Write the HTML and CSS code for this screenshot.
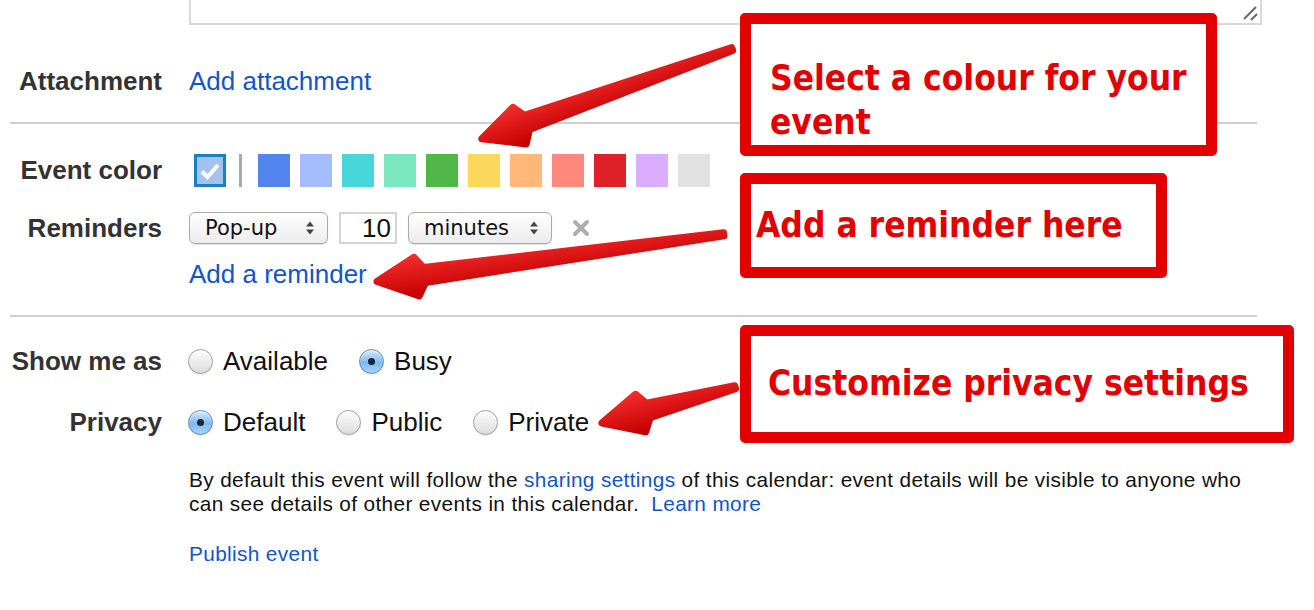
FILE: index.html
```html
<!DOCTYPE html>
<html lang="en">

<head>
    <meta charset="UTF-8" />
    <title>Event details</title>
    <link rel="stylesheet" href="styles.css">
</head>

<body>
    <div class="page">
        <!-- bottom of the description textarea -->
        <div class="desc-box">
            <svg class="grip" width="16" height="16" viewBox="0 0 16 16">
                <line x1="2" y1="14" x2="14" y2="2" stroke="#666" stroke-width="2" />
                <line x1="9" y1="15" x2="15" y2="9" stroke="#666" stroke-width="2" />
            </svg>
        </div>

        <div class="row row-attach">
            <div class="label">Attachment</div>
            <div class="field"><a href="#">Add attachment</a></div>
        </div>

        <hr class="sep">

        <div class="row row-color">
            <div class="label">Event color</div>
            <div class="field swatches">
                <span class="swatch current">
                    <svg width="26" height="26" viewBox="0 0 26 26">
                        <path d="M5 13.5 L10.5 19 L21 7" fill="none" stroke="#fff" stroke-width="4" />
                    </svg>
                </span>
                <span class="swatch-bar"></span>
                <span class="swatch" style="background:#5484ed"></span>
                <span class="swatch" style="background:#a4bdfc"></span>
                <span class="swatch" style="background:#46d6db"></span>
                <span class="swatch" style="background:#7ae7bf"></span>
                <span class="swatch" style="background:#51b749"></span>
                <span class="swatch" style="background:#fbd75b"></span>
                <span class="swatch" style="background:#ffb878"></span>
                <span class="swatch" style="background:#ff887c"></span>
                <span class="swatch" style="background:#dc2127"></span>
                <span class="swatch" style="background:#dbadff"></span>
                <span class="swatch" style="background:#e1e1e1"></span>
            </div>
        </div>

        <div class="row row-remind">
            <div class="label">Reminders</div>
            <div class="field reminder">
                <span class="select select-type">Pop-up
                    <svg class="updown" width="10" height="14" viewBox="0 0 10 14">
                        <path d="M1 5.5 L5 0.5 L9 5.5 Z M1 8.5 L5 13.5 L9 8.5 Z" fill="#444" />
                    </svg>
                </span>
                <span class="num">10</span>
                <span class="select select-unit">minutes
                    <svg class="updown" width="10" height="14" viewBox="0 0 10 14">
                        <path d="M1 5.5 L5 0.5 L9 5.5 Z M1 8.5 L5 13.5 L9 8.5 Z" fill="#444" />
                    </svg>
                </span>
                <svg class="remove" width="18" height="18" viewBox="0 0 18 18">
                    <path d="M3 3 L15 15 M15 3 L3 15" stroke="#adadad" stroke-width="4" stroke-linecap="round" />
                </svg>
            </div>
        </div>

        <div class="row row-add">
            <div class="label"></div>
            <div class="field"><a href="#">Add a reminder</a></div>
        </div>

        <hr class="sep sep-2">

        <div class="row row-show">
            <div class="label">Show me as</div>
            <div class="field options">
                <label class="option"><span class="radio"></span>Available</label>
                <label class="option"><span class="radio checked"></span>Busy</label>
            </div>
        </div>

        <div class="row row-privacy">
            <div class="label">Privacy</div>
            <div class="field options">
                <label class="option"><span class="radio checked"></span>Default</label>
                <label class="option"><span class="radio"></span>Public</label>
                <label class="option"><span class="radio"></span>Private</label>
            </div>
        </div>

        <p class="note">By default this event will follow the <a href="#">sharing settings</a> of this calendar: event details will be visible to anyone who<br>can see details of other events in this calendar. &nbsp;<a href="#">Learn more</a></p>

        <p class="publish"><a href="#">Publish event</a></p>

        <!-- annotation layer -->
        <svg class="arrows" width="1314" height="610" viewBox="0 0 1314 610">
            <defs>
                <linearGradient id="red" x1="0" y1="0" x2="0" y2="1">
                    <stop offset="0" stop-color="#f22a2a" />
                    <stop offset="1" stop-color="#c40000" />
                </linearGradient>
            </defs>
            <g transform="translate(478 140) rotate(-19.7)">
                <path d="M4 0 L44 -19 L52 -7.5 L270 -1.5 L270 1.5 L52 7.5 L44 20 Z" fill="url(#red)" stroke="url(#red)" stroke-width="7" stroke-linejoin="round" />
            </g>
            <g transform="translate(373 282) rotate(-7.74)">
                <path d="M4 0 L44 -19 L52 -7.5 L354 -1.5 L354 1.5 L52 7.5 L44 20 Z" fill="url(#red)" stroke="url(#red)" stroke-width="7" stroke-linejoin="round" />
            </g>
            <g transform="translate(598 424) rotate(-15)">
                <path d="M4 0 L44 -19 L52 -7.5 L142 -1.5 L142 1.5 L52 7.5 L44 20 Z" fill="url(#red)" stroke="url(#red)" stroke-width="7" stroke-linejoin="round" />
            </g>
        </svg>

        <div class="callout callout-color">Select a colour for your<br>event</div>
        <div class="callout callout-remind">Add a reminder here</div>
        <div class="callout callout-privacy">Customize privacy settings</div>
    </div>
</body>

</html>
```

FILE: styles.css
```css
body {
    margin: 0;
    font-family: "Liberation Sans", Arial, sans-serif;
    color: #222;
    background-color: #fff;
}

a {
    color: #1155cc;
    text-decoration: none;
}

.page {
    position: relative;
    width: 1314px;
    height: 610px;
    overflow: hidden;
}

.desc-box {
    position: relative;
    box-sizing: border-box;
    margin-left: 189px;
    width: 1073px;
    height: 25px;
    border: 2px solid #d9d9d9;
    border-top: none;
}

.grip {
    position: absolute;
    right: 2px;
    bottom: 2px;
}

.row {
    display: grid;
    grid-template-columns: 162px 1fr;
    column-gap: 27px;
    align-items: center;
}

.label {
    text-align: right;
    font-weight: bold;
    font-size: 26px;
    color: #333;
}

.field {
    font-size: 26px;
}

.row-attach {
    margin-top: 36px;
    height: 40px;
}

.sep {
    margin: 21px 57px 0 10px;
    border: none;
    height: 2px;
    background-color: #cfcfcf;
}

.sep-2 {
    margin-top: 26px;
}

.row-color {
    margin-top: 30px;
    height: 33px;
}

.swatches {
    display: flex;
    align-items: center;
    gap: 10px;
}

.swatch {
    display: block;
    width: 32px;
    height: 33px;
}

.swatch.current {
    box-sizing: border-box;
    margin-left: 5px;
    border: 3px solid #1a80c6;
    background-color: #a3c3ec;
    display: flex;
    align-items: center;
    justify-content: center;
}

.swatch-bar {
    display: block;
    width: 3px;
    height: 33px;
    margin: 0 6px 0 3px;
    background-color: #aaa;
}

.row-remind {
    margin-top: 25px;
    height: 32px;
}

.reminder {
    display: flex;
    align-items: center;
    gap: 11px;
}

.select {
    box-sizing: border-box;
    display: flex;
    align-items: center;
    justify-content: space-between;
    height: 32px;
    padding: 0 12px 0 15px;
    border: 1px solid #a9a9a9;
    border-radius: 6px;
    background: linear-gradient(#ffffff, #ececec);
    box-shadow: 0 1px 1px rgba(0, 0, 0, 0.12);
    font-family: "DejaVu Sans", Verdana, sans-serif;
    font-size: 21px;
    color: #111;
}

.select-type {
    width: 139px;
}

.select-unit {
    width: 144px;
}

.num {
    box-sizing: border-box;
    width: 58px;
    height: 32px;
    padding-right: 4px;
    border: 2px solid #d4d4d4;
    font-size: 26px;
    line-height: 28px;
    text-align: right;
    color: #111;
}

.remove {
    margin-left: 9px;
}

.row-add {
    margin-top: 15px;
    height: 30px;
}

.row-show {
    margin-top: 24px;
    height: 40px;
}

.row-privacy {
    margin-top: 21px;
    height: 40px;
}

.options {
    display: flex;
    align-items: center;
    color: #111;
}

.option {
    display: flex;
    align-items: center;
    margin-right: 32px;
}

.radio {
    box-sizing: border-box;
    width: 25px;
    height: 25px;
    margin: 0 10px 0 -1px;
    border: 1px solid #a0a0a0;
    border-radius: 50%;
    background: linear-gradient(#fdfdfd, #dcdcdc);
    box-shadow: inset 0 1px 1px rgba(255, 255, 255, 0.9), 0 1px 1px rgba(0, 0, 0, 0.1);
    display: flex;
    align-items: center;
    justify-content: center;
}

.radio.checked {
    border-color: #5f87b8;
    background: linear-gradient(#d6eafc, #7db9ef 55%, #a9d4fa);
}

.radio.checked::after {
    content: "";
    width: 7px;
    height: 7px;
    border-radius: 50%;
    background-color: #16263a;
}

.note {
    margin: 26px 0 0 189px;
    width: 1073px;
    font-size: 20.8px;
    letter-spacing: 0.36px;
    line-height: 24px;
    color: #111;
}

.publish {
    margin: 26px 0 0 189px;
    font-size: 20.8px;
    letter-spacing: 0.36px;
    line-height: 24px;
}

/* annotations drawn over the form */
.arrows {
    position: absolute;
    left: 0;
    top: 0;
    pointer-events: none;
}

.callout {
    position: absolute;
    box-sizing: border-box;
    left: 740px;
    border: 11px solid #e30000;
    border-radius: 5px;
    background-color: #fff;
    font-family: "DejaVu Sans Condensed", "DejaVu Sans", sans-serif;
    font-stretch: condensed;
    font-weight: bold;
    font-size: 35px;
    line-height: 44px;
    color: #e30000;
    white-space: nowrap;
}

.callout-color {
    top: 13px;
    width: 477px;
    height: 143px;
    padding: 32px 0 0 19px;
}

.callout-remind {
    top: 173px;
    width: 427px;
    height: 105px;
    padding: 19px 0 0 5px;
}

.callout-privacy {
    top: 325px;
    width: 554px;
    height: 118px;
    padding: 25px 0 0 17px;
}
```
